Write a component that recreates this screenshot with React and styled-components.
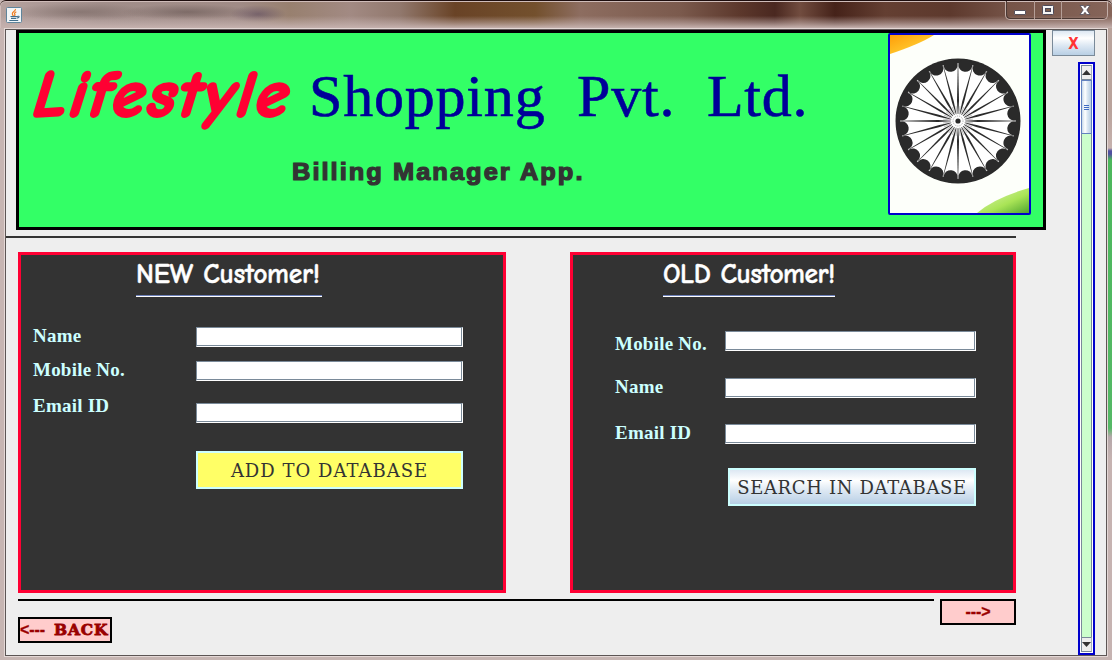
import React from "react";
import styled, { createGlobalStyle } from "styled-components";

const comic = `"Comic Sans MS", "Comic Neue", Lato, sans-serif`;

const GlobalStyle = createGlobalStyle`
  *, *::before, *::after { box-sizing: border-box; }
  body { margin: 0; overflow: hidden; font-family: "Liberation Sans", Arial, sans-serif; }
  button, input { font: inherit; margin: 0; padding: 0; border-radius: 0; }
`;

const Frame = styled.div`
  width: 1112px;
  height: 660px;
  display: flex;
  flex-direction: column;
  background:
    linear-gradient(180deg, #b9a39c 0 110px, #c6b2ae 148px, #5050a0 151px, #5050a0 154px, #4cb75c 160px, #55b866 428px, #b5a8aa 437px, #c6b3b1 460px) right / 5px 100% no-repeat,
    #c6b5b2;
`;

const TitleBar = styled.header`
  height: 28px;
  flex: none;
  display: flex;
  justify-content: space-between;
  padding: 0 4px 0 6px;
  border-top: 1px solid #1d0d0d;
  border-radius: 6px 6px 0 0;
  box-shadow: inset 0 1px #cfbcb9, inset 1px 0 #cfbcb9;
  background:
    linear-gradient(180deg, transparent 55%, rgba(200, 181, 179, 0.5) 80%, #c5b1ae 100%),
    radial-gradient(ellipse 28px 9px at 258px 13px, #5e4b5e99, transparent),
    radial-gradient(ellipse 65px 8px at 187px 11px, #5f4f4c88, transparent),
    radial-gradient(ellipse 70px 9px at 80px 11px, #71605c88, transparent),
    linear-gradient(90deg, #b5a29f 0, #a18e8a 100px, #a08b86 240px, #98806f 290px, #a28a83 350px, #91786d 400px, #694326 455px, #73502d 535px, #8d6d60 580px, #7b5a4d 680px, #5c382c 740px, #4a2820 775px, #714c3f 800px, #452219 835px, #643f32 885px, #5d392d 950px, #765448 1010px, #86655a 1112px);
`;

const AppIcon = styled.svg`
  margin-top: 6px;
  width: 16px;
  height: 16px;
`;

const WindowButtons = styled.div`
  display: flex;
  width: 103px;
  height: 19px;
  border: 1px solid #c3aea8;
  border-top: 0;
  border-radius: 0 0 5px 5px;
  box-shadow: inset 1px -1px #4b3934;
`;

const WindowButton = styled.div`
  width: ${(p) => p.$w}px;
  display: grid;
  place-items: center;
  padding-top: ${(p) => p.$drop || 0}px;
  border-left: ${(p) => (p.$first ? "0" : "1px solid #b59e97")};
`;

const Client = styled.main`
  width: 1102px;
  height: 627px;
  margin: 1px 0 0 5px;
  border: 1px solid #5c5554;
  box-shadow: 0 0 0 1px #e4d8d6;
  background: #eee;
  display: flex;
  gap: 6px;
`;

const MainColumn = styled.div`
  width: 1040px;
  display: flex;
  flex-direction: column;
`;

const Banner = styled.section`
  height: 200px;
  flex: none;
  margin-left: 10px;
  border: 3px solid #000;
  background: #33ff66;
  display: flex;
  justify-content: space-between;
  padding: 0 12px 0 11px;
`;

const Brand = styled.div`
  display: flex;
  flex-direction: column;
`;

const BrandLine = styled.h1`
  margin: 0;
  height: 125px;
  display: flex;
  align-items: baseline;
  padding-top: 27px;
  white-space: pre;
  font-weight: 400;
`;

const BrandAccent = styled.span`
  width: 279px;
  flex: none;
  font: 900 65.5px/70px ${comic};
  letter-spacing: 3.3px;
  color: #ff0033;
  transform: skewX(-17deg);
  transform-origin: 0 75%;
  -webkit-text-stroke: 3px #ff0033;
  stroke-linejoin: round;
`;

const BrandName = styled.span`
  font: 400 60px/70px "Liberation Serif", "Times New Roman", serif;
  letter-spacing: 0.8px;
  color: #000099;
  -webkit-text-stroke: 0.6px #000099;
`;

const Tagline = styled.p`
  margin: 0 0 0 262px;
  font: 700 23.5px/28px "Liberation Sans", Arial, sans-serif;
  letter-spacing: 1.9px;
  color: #333;
  -webkit-text-stroke: 1.2px #333;
  transform: scaleX(1.08);
  transform-origin: 0 50%;
`;

const Emblem = styled.svg`
  flex: none;
  width: 143px;
  height: 182px;
  border: 2px solid #0000cc;
  border-radius: 2px;
  background: #fdfffa;
`;

const Rule = styled.div`
  height: 2px;
  flex: none;
  width: ${(p) => p.$w}px;
  margin-top: ${(p) => p.$top || 0}px;
  background: ${(p) => p.$color};
`;

const Panels = styled.div`
  display: flex;
  gap: 64px;
  margin: 14px 0 6px 12px;
`;

const Panel = styled.form`
  width: ${(p) => p.$w}px;
  height: 341px;
  border: 3px solid #ff0033;
  background: #333;
  display: flex;
  flex-direction: column;
  padding-left: ${(p) => p.$pad}px;
`;

const PanelTitle = styled.h2`
  margin: 0 0 ${(p) => p.$after}px ${(p) => p.$indent}px;
  width: ${(p) => p.$w}px;
  height: 42px;
  padding-top: 3px;
  font: 700 27.5px/32px ${comic};
  letter-spacing: ${(p) => p.$track}px;
  word-spacing: 1px;
  white-space: nowrap;
  color: #fff;
  -webkit-text-stroke: 0.4px #fff;
  border-bottom: 1px solid #fff;
  box-shadow: inset 0 -1px #6c7fb8;
`;

const Row = styled.div`
  display: flex;
  align-items: flex-start;
  height: ${(p) => p.$h}px;
`;

const Label = styled.label`
  width: ${(p) => p.$w}px;
  flex: none;
  margin-top: ${(p) => p.$drop}px;
  font: 700 19px/22px "Liberation Serif", "Times New Roman", serif;
  letter-spacing: 0.22px;
  color: #ccffff;
`;

const Field = styled.input`
  width: ${(p) => p.$w}px;
  height: 20px;
  outline: 0;
  border: 1px solid #7a8a99;
  border-right-color: #fff;
  border-bottom-color: #fff;
  background: #fff;
  box-shadow: inset -1px -1px #7a8a99;
`;

const ActionButton = styled.button`
  width: ${(p) => p.$w}px;
  height: 38px;
  flex: none;
  margin-left: ${(p) => p.$indent}px;
  padding-top: 2px;
  border: 2px solid #ccffff;
  background: ${(p) => p.$bg};
  color: #333;
  font: 400 18px/32px "DejaVu Serif", serif;
  letter-spacing: ${(p) => p.$track}px;
  white-space: nowrap;
`;

const Footer = styled.footer`
  display: flex;
  margin-left: 12px;
  width: 998px;
  height: 44px;
  justify-content: space-between;
`;

const FooterLeft = styled.div`
  display: flex;
  flex-direction: column;
  gap: 16px;
`;

const NavButton = styled.button`
  width: ${(p) => p.$w}px;
  height: 26px;
  border: 2px solid #000;
  background: #ffcccc;
  color: #990000;
  display: flex;
  align-items: center;
  justify-content: ${(p) => (p.$start ? "flex-start" : "center")};
  font: 700 15.5px/22px "DejaVu Serif", serif;
  letter-spacing: 0.9px;
  -webkit-text-stroke: 0.8px #990000;
`;

const Arrow = styled.span`
  font: 700 16px/22px "Liberation Sans", Arial, sans-serif;
  letter-spacing: -0.1px;
  margin-right: ${(p) => p.$gap || 0}px;
  -webkit-text-stroke: 0.3px #990000;
`;

const SideColumn = styled.aside`
  width: 43px;
  display: flex;
  flex-direction: column;
  align-items: flex-end;
  gap: 6px;
`;

const CloseButton = styled.button`
  width: 43px;
  height: 26px;
  padding-top: 1px;
  border: 1px solid #7a8a99;
  background: linear-gradient(#dde8f3, #fff 30%, #dde8f3 60%, #b8cfe5);
  color: #ff3333;
  font: 700 15px/22px "DejaVu Sans Condensed", "DejaVu Sans", sans-serif;
`;

const ScrollBar = styled.div`
  width: 17px;
  height: 593px;
  border: 2px solid #0000cc;
  padding: 1px;
  background: #fff;
  display: flex;
  flex-direction: column;
`;

const ScrollArrow = styled.div`
  height: 15px;
  flex: none;
  border: 1px solid #7a8a99;
  border-right-color: #a8b3bd;
  background: #eee;
  display: grid;
  place-items: center;
`;

const Thumb = styled.div`
  height: 54px;
  flex: none;
  border: 1px solid #6382bf;
  background: linear-gradient(90deg, #c8daeb, #fff 35%, #dce8f3 60%, #b8cfe5);
  display: flex;
  flex-direction: column;
  align-items: center;
  justify-content: center;
  gap: 1px;
`;

const Grip = styled.i`
  width: 5px;
  height: 1px;
  background: #3f6bc4;
`;

const Track = styled.div`
  flex: 1;
  border: solid #7a8a99;
  border-width: 0 1px;
  background: #ccffcc;
`;

const spokes = Array.from({ length: 24 }, (_, i) => i * 15);

function Chakra() {
  return (
    <Emblem viewBox="0 0 139 178">
      <defs>
        <linearGradient id="saffron" x1="0" y1="0" x2="1" y2="1">
          <stop offset="0" stopColor="#ff9d08" />
          <stop offset="0.6" stopColor="#ffc52b" />
          <stop offset="1" stopColor="#fff0b0" />
        </linearGradient>
        <linearGradient id="leaf" x1="0" y1="0" x2="1" y2="1">
          <stop offset="0" stopColor="#e5f7bd" />
          <stop offset="0.6" stopColor="#a9e456" />
          <stop offset="1" stopColor="#4fa52f" />
        </linearGradient>
      </defs>
      <path d="M0 0H44Q30 9 0 19Z" fill="url(#saffron)" />
      <path d="M87 178Q104 163 139 153V178Z" fill="url(#leaf)" />
      <g transform="translate(68 86)" fill="#2a2a2a">
        <circle r="62.5" />
        <circle r="57.5" fill="#fff" />
        {spokes.map((a) => (
          <g key={a} transform={`rotate(${a})`}>
            <ellipse cx="0" cy="-56" rx="6.9" ry="6.2" transform="rotate(7.5)" />
            <path d="M-0.3 -7L-1 -20L-0.2 -57H0.2L1 -20L0.3 -7Z" />
            <path d="M0 -8V-15" stroke="#888" strokeWidth="0.5" transform="rotate(7.5)" />
          </g>
        ))}
        <circle r="6" fill="#fff" />
        <circle r="5" fill="none" stroke="#999" strokeWidth="0.8" strokeDasharray="1 1" />
        <circle r="2.6" />
      </g>
    </Emblem>
  );
}

function JavaIcon() {
  return (
    <AppIcon viewBox="0 0 16 16">
      <rect x="0.5" y="0.5" width="15" height="15" rx="1" fill="#f2f6f8" stroke="#60859c" />
      <path d="M9.5 2C10 4 6 5 6.3 6.8Q6.5 8 7.5 9M10.3 4.7C8 6 8.2 6.8 9 7.7Q9 8.5 8.2 9" fill="none" stroke="#ee7b20" strokeWidth="1.2" />
      <path d="M4.5 9.5H11M11 9.5Q13.5 8.7 13 10Q12.5 11 10.5 11.3M5 11.4H10M3.3 13.5H12.2" fill="none" stroke="#426e8c" strokeWidth="1.1" />
    </AppIcon>
  );
}

function FormRow({ height, label, labelWidth, drop, width }) {
  return (
    <Row $h={height}>
      <Label $w={labelWidth} $drop={drop}>{label}</Label>
      <Field $w={width} aria-label={label} />
    </Row>
  );
}

export default function App() {
  return (
    <>
      <GlobalStyle />
      <Frame>
        <TitleBar>
          <JavaIcon />
          <WindowButtons>
            <WindowButton $w={28} $first $drop={3}>
              <svg width="12" height="6"><rect x="0.5" y="1.5" width="11" height="4" rx="0.5" fill="#fff" stroke="#57535f" /></svg>
            </WindowButton>
            <WindowButton $w={27}>
              <svg width="12" height="10"><rect x="0.5" y="0.5" width="11" height="9" rx="1" fill="#f5f5f5" stroke="#4d4b5a" /><rect x="3.5" y="3.5" width="5" height="3" fill="#80604f" stroke="#4d4b5a" /></svg>
            </WindowButton>
            <WindowButton $w={46}>
              <svg width="12" height="10" viewBox="0 0 12 10"><path d="M1 .5H4.3L6 2.7 7.7.5H11L7.8 5 11 9.5H7.7L6 7.3 4.3 9.5H1L4.2 5Z" fill="#fff" stroke="#4d4b5a" strokeWidth="0.8" /></svg>
            </WindowButton>
          </WindowButtons>
        </TitleBar>
        <Client>
          <MainColumn>
            <Banner>
              <Brand>
                <BrandLine>
                  <BrandAccent>Lifestyle</BrandAccent>
                  <BrandName>{"Shopping  Pvt.  Ltd."}</BrandName>
                </BrandLine>
                <Tagline>Billing Manager App.</Tagline>
              </Brand>
              <Chakra />
            </Banner>
            <Rule $w={1010} $top={6} $color="#333" />
            <Panels>
              <Panel $w={488} $pad={12}>
                <PanelTitle $indent={103} $w={186} $after={30} $track={-0.25}>NEW Customer!</PanelTitle>
                <FormRow height={34} label="Name" labelWidth={163} drop={-2} width={267} />
                <FormRow height={42} label="Mobile No." labelWidth={163} drop={-2} width={267} />
                <FormRow height={48} label="Email ID" labelWidth={163} drop={-8} width={267} />
                <ActionButton type="button" $w={267} $indent={163} $bg="#ffff66" $track={1}>ADD TO DATABASE</ActionButton>
              </Panel>
              <Panel $w={446} $pad={42}>
                <PanelTitle $indent={48} $w={172} $after={34} $track={-0.5}>OLD Customer!</PanelTitle>
                <FormRow height={47} label="Mobile No." labelWidth={110} drop={2} width={251} />
                <FormRow height={46} label="Name" labelWidth={110} drop={-2} width={251} />
                <FormRow height={44} label="Email ID" labelWidth={110} drop={-2} width={251} />
                <ActionButton
                  type="button"
                  $w={248}
                  $indent={113}
                  $bg="linear-gradient(#dde8f3, #fff 30%, #dde8f3 60%, #b8cfe5)"
                  $track={0.65}
                >
                  SEARCH IN DATABASE
                </ActionButton>
              </Panel>
            </Panels>
            <Footer>
              <FooterLeft>
                <Rule $w={916} $color="#000" />
                <NavButton type="button" $w={94} $start>
                  <Arrow $gap={9}>&lt;---</Arrow>BACK
                </NavButton>
              </FooterLeft>
              <NavButton type="button" $w={76}>
                <Arrow>---&gt;</Arrow>
              </NavButton>
            </Footer>
          </MainColumn>
          <SideColumn>
            <CloseButton type="button">X</CloseButton>
            <ScrollBar>
              <ScrollArrow><svg width="9" height="5"><path d="M0 5L4.5 0L9 5Z" fill="#333" /></svg></ScrollArrow>
              <Thumb><Grip /><Grip /><Grip /></Thumb>
              <Track />
              <ScrollArrow><svg width="9" height="5"><path d="M0 0L4.5 5L9 0Z" fill="#333" /></svg></ScrollArrow>
            </ScrollBar>
          </SideColumn>
        </Client>
      </Frame>
    </>
  );
}
